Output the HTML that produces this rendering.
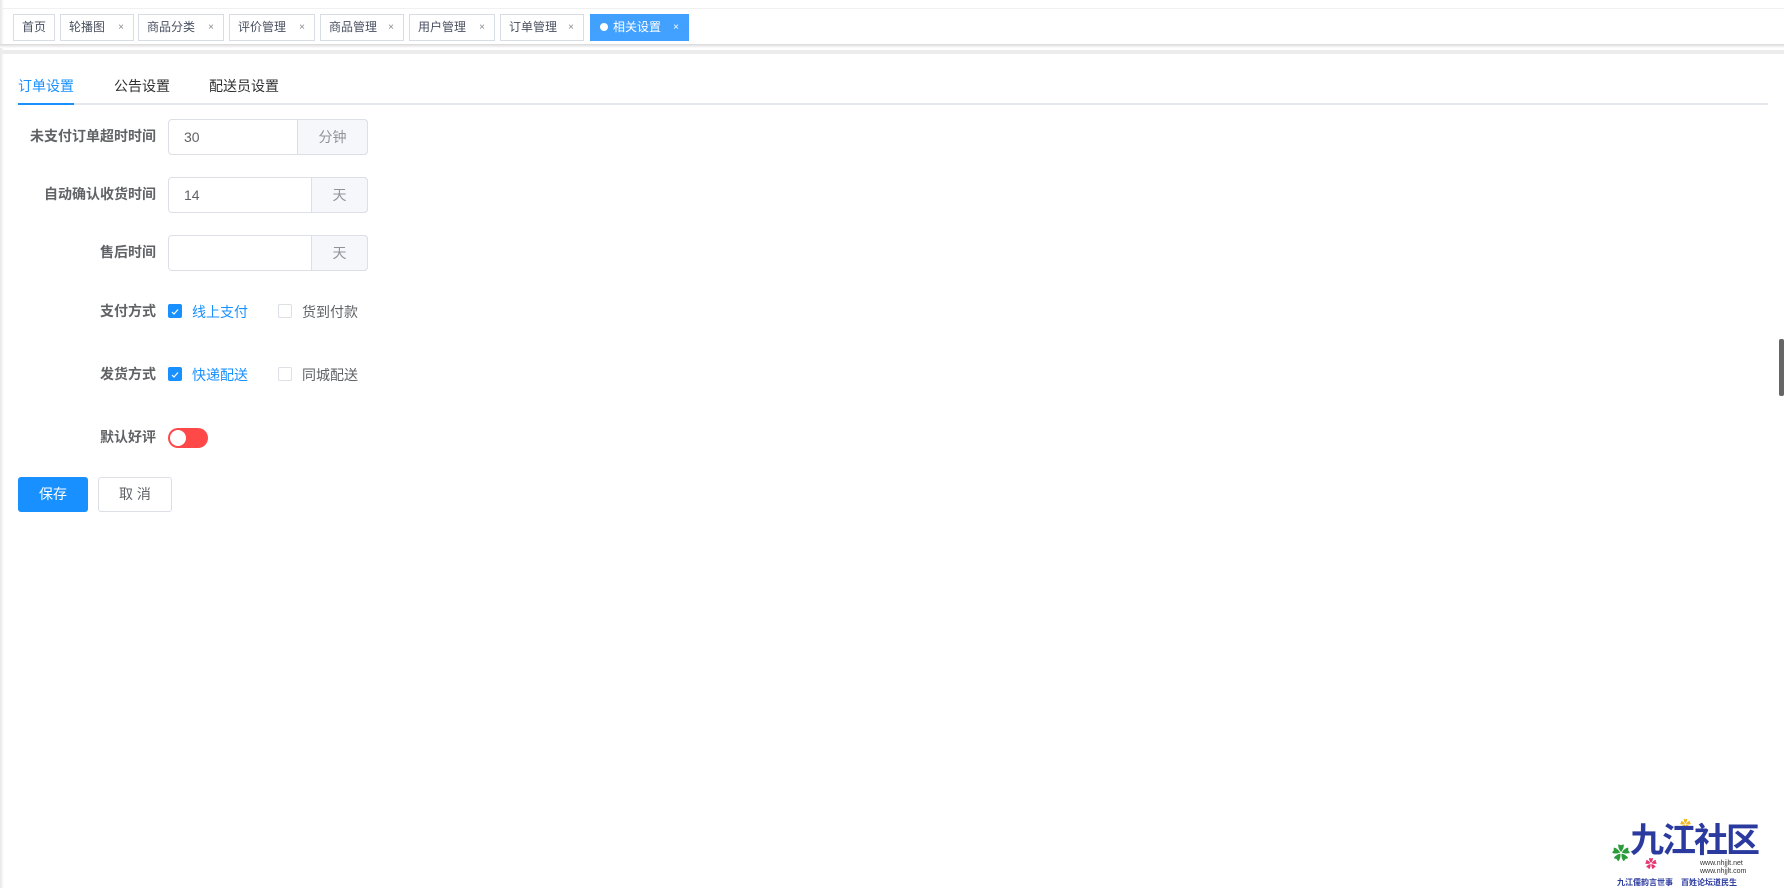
<!DOCTYPE html>
<html><head><meta charset="utf-8"><style>
*{box-sizing:border-box;margin:0;padding:0}
body{width:1784px;height:888px;background:#fff;font-family:"Liberation Sans","Noto Sans CJK SC",sans-serif;position:relative;overflow:hidden;color:#606266}
.a{position:absolute}
.tab{position:absolute;top:14px;height:27px;border:1px solid #d8dce5;font-size:12px;color:#495060;line-height:25px;padding-left:8px;background:#fff}
.tab i{font-style:normal;position:absolute;right:9px;font-size:10px;color:#888}
.lbl{position:absolute;right:1628px;font-size:14px;font-weight:bold;color:#606266;text-align:right;white-space:nowrap}
.inp{position:absolute;left:168px;width:200px;height:36px;border:1px solid #dcdfe6;border-radius:4px;font-size:14px;color:#606266;line-height:34px;padding-left:15px}
.ap{position:absolute;top:-1px;right:-1px;height:36px;background:#f5f7fa;border:1px solid #dcdfe6;border-radius:0 4px 4px 0;color:#909399;text-align:center;line-height:34px}
.cb{position:absolute;width:14px;height:14px;border:1px solid #dcdfe6;border-radius:2px;background:#fff}
.cb.on{background:#1890ff;border-color:#1890ff}
.t{position:absolute;font-size:14px;white-space:nowrap}
</style></head><body>
<div class="a" style="left:0;top:0;width:4px;height:888px;background:linear-gradient(90deg,#e6e6e6,#fff)"></div>
<div class="a" style="left:0;top:8px;width:1784px;height:1px;background:#f0f0f0"></div>
<div class="a" style="left:0;top:44px;width:1784px;height:4px;background:linear-gradient(#d8d8d8,#fff)"></div>
<div class="a" style="left:0;top:50px;width:1784px;height:4px;background:#ececec"></div>
<div class="tab" style="left:13px;width:42px">首页</div>
<div class="tab" style="left:60px;width:74px">轮播图<i>×</i></div>
<div class="tab" style="left:138px;width:86px">商品分类<i>×</i></div>
<div class="tab" style="left:229px;width:86px">评价管理<i>×</i></div>
<div class="tab" style="left:320px;width:84px">商品管理<i>×</i></div>
<div class="tab" style="left:409px;width:86px">用户管理<i>×</i></div>
<div class="tab" style="left:500px;width:84px">订单管理<i>×</i></div>
<div class="tab" style="left:590px;width:99px;background:#42a0ff;border-color:#42a0ff;color:#fff;padding-left:9px"><span style="display:inline-block;width:8px;height:8px;border-radius:50%;background:#fff;margin-right:5px;vertical-align:0"></span>相关设置<i style="color:#fff">×</i></div>

<div class="t" style="left:18px;top:76px;font-size:14px;color:#1890ff">订单设置</div>
<div class="t" style="left:114px;top:76px;font-size:14px;color:#303133">公告设置</div>
<div class="t" style="left:209px;top:76px;font-size:14px;color:#303133">配送员设置</div>
<div class="a" style="left:18px;top:103px;width:1750px;height:2px;background:#e4e7ed"></div>
<div class="a" style="left:18px;top:103px;width:56px;height:2px;background:#1890ff"></div>

<div class="lbl" style="top:126px">未支付订单超时时间</div>
<div class="inp" style="top:119px">30<div class="ap" style="width:71px">分钟</div></div>
<div class="lbl" style="top:184px">自动确认收货时间</div>
<div class="inp" style="top:177px">14<div class="ap" style="width:57px">天</div></div>
<div class="lbl" style="top:242px">售后时间</div>
<div class="inp" style="top:235px"><div class="ap" style="width:57px">天</div></div>

<div class="lbl" style="top:301px">支付方式</div>
<div class="cb on" style="left:168px;top:304px"><svg width="12" height="12" viewBox="0 0 12 12"><path d="M3 6l2 2 4-4.5" stroke="#fff" stroke-width="1.2" fill="none"/></svg></div>
<div class="t" style="left:192px;top:302px;color:#1890ff">线上支付</div>
<div class="cb" style="left:278px;top:304px"></div>
<div class="t" style="left:302px;top:302px">货到付款</div>

<div class="lbl" style="top:364px">发货方式</div>
<div class="cb on" style="left:168px;top:367px"><svg width="12" height="12" viewBox="0 0 12 12"><path d="M3 6l2 2 4-4.5" stroke="#fff" stroke-width="1.2" fill="none"/></svg></div>
<div class="t" style="left:192px;top:365px;color:#1890ff">快递配送</div>
<div class="cb" style="left:278px;top:367px"></div>
<div class="t" style="left:302px;top:365px">同城配送</div>

<div class="lbl" style="top:427px">默认好评</div>
<div class="a" style="left:168px;top:428px;width:40px;height:20px;border-radius:10px;background:#ff4949"><div class="a" style="left:2px;top:2px;width:16px;height:16px;border-radius:50%;background:#fff"></div></div>

<div class="a" style="left:18px;top:477px;width:70px;height:35px;background:#1890ff;border-radius:3px;color:#fff;font-size:14px;text-align:center;line-height:35px">保存</div>
<div class="a" style="left:98px;top:477px;width:74px;height:35px;border:1px solid #dcdfe6;border-radius:3px;color:#606266;font-size:14px;text-align:center;line-height:33px">取 消</div>

<div class="a" style="left:1779px;top:339px;width:5px;height:57px;background:#666;border-radius:2px"></div>

<div class="a" style="left:1612px;top:845px;font-size:18px;color:#2a9a3a;line-height:18px">✿</div>
<div class="a" style="left:1645px;top:858px;font-size:12px;color:#e8336f;line-height:12px">✿</div>
<div class="a" style="left:1680px;top:820px;font-size:11px;color:#f2b51c;line-height:11px">✿</div>
<div class="a" style="left:1630px;top:818px;font-size:34px;font-weight:bold;color:#2b3a9e;letter-spacing:-2px;font-family:'Noto Sans CJK SC',sans-serif;line-height:40px">九江社区</div>
<div class="a" style="left:1700px;top:860px;font-size:7px;color:#333;line-height:8px">www.nhjjlt.net<br>www.nhjjlt.com</div>
<div class="a" style="left:1617px;top:877px;font-size:8px;color:#2b3a9e;font-weight:bold;white-space:nowrap">九江儒韵言世事　百姓论坛道民生</div>
</body></html>
